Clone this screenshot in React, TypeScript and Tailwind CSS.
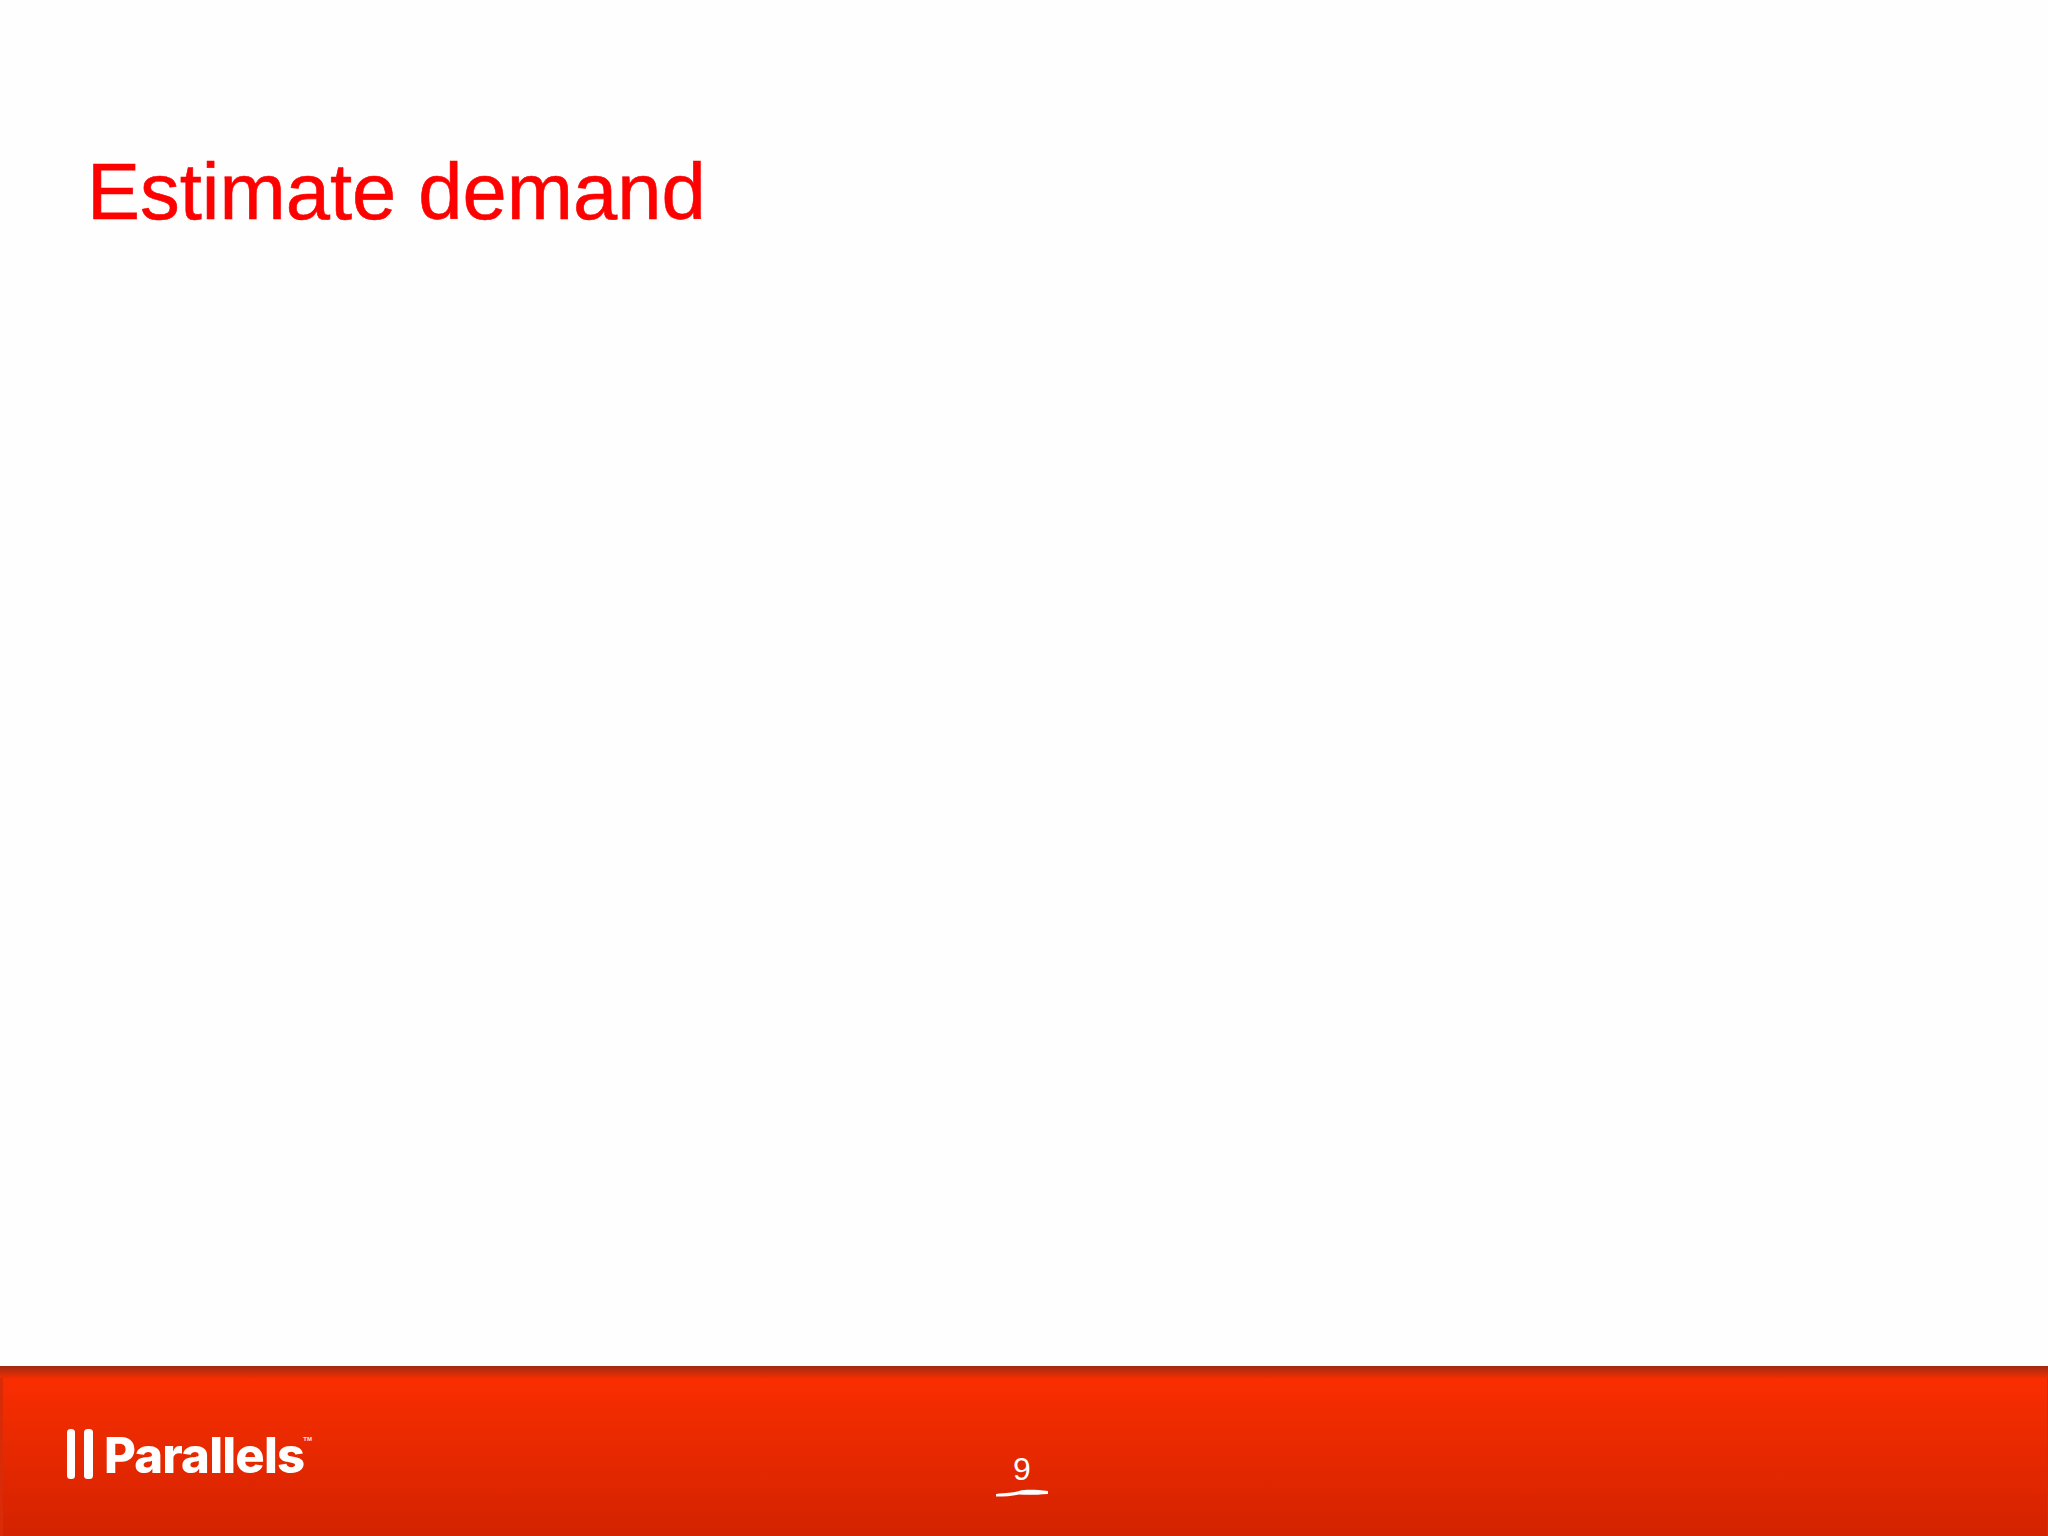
const ParallelsLogo = () => {
  return (
    <div className="flex items-start">
      <svg width="27" height="52" viewBox="0 0 27 52" className="shrink-0">
        <rect x="0" y="1" width="8" height="50" rx="3.5" fill="#fff" />
        <rect x="17" y="1" width="9" height="50" rx="3.5" fill="#fff" />
      </svg>
      <span className="ml-[10px] mt-[3px] text-[49px] leading-[50px] font-extrabold tracking-[-0.8px] text-white font-['Inter',sans-serif]">
        Parallels
      </span>
      <span className="mt-[7px] -ml-[1px] text-[6px] leading-[8px] font-bold text-white/90 font-['Liberation_Sans',sans-serif]">
        TM
      </span>
    </div>
  );
};

const App = () => {
  return (
    <div className="flex flex-col h-screen w-full bg-[#fefefe] font-['Liberation_Sans',sans-serif]">
      <div className="flex-1 pl-[87px] pt-[146px]">
        <h1 className="text-[79.5px] leading-[92px] font-normal text-[#ff0000] [-webkit-text-stroke:0.6px_#ff0000]">
          Estimate demand
        </h1>
      </div>
      <div className="flex flex-col h-[170px] shrink-0 border-l-[3px] border-r-[1px] border-[#d92b08]">
        <div className="h-[12px] bg-gradient-to-b from-[#a02a10] to-[#f02c00] -mx-[3px]" />
        <div className="relative flex-1 pl-[64px] pt-[50px] bg-gradient-to-b from-[#f92e00] to-[#d32300]">
          <ParallelsLogo />
          <div className="absolute left-[992px] top-[76px] flex w-[54px] flex-col items-center">
            <span className="text-[32px] leading-[30px] text-white">9</span>
            <svg width="54" height="8" viewBox="0 0 54 8" className="mt-[5px]">
              <path d="M1 5 C12 4 18 4 24 2 C32 0 42 1 53 2 L53 5 C40 6 32 6 24 5.5 C18 7 10 7.5 1 7.5 Z" fill="#fff" />
            </svg>
          </div>
        </div>
      </div>
    </div>
  );
};

export default App;
